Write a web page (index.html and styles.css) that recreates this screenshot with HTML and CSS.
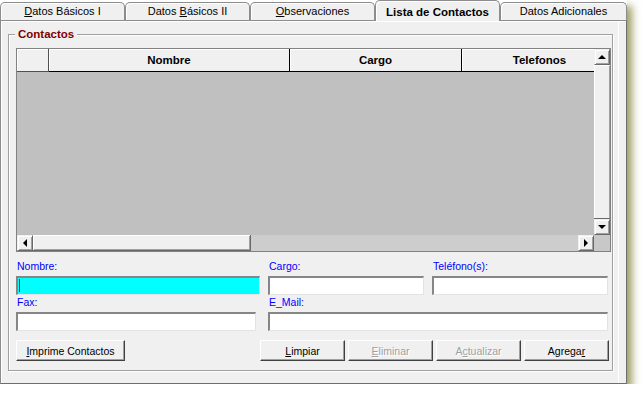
FILE: index.html
```html
<!DOCTYPE html>
<html lang="es">
  <head>
    <meta charset="UTF-8" />
    <title>Lista de Contactos</title>
    <link rel="stylesheet" href="styles.css">
  </head>
  <body>
    <div class="window">
      <!-- pestañas -->
      <div class="tabs">
        <div class="tab"><u>D</u>atos Básicos I</div>
        <div class="tab">Datos <u>B</u>ásicos II</div>
        <div class="tab"><u>O</u>bservaciones</div>
        <div class="tab active">Lista de Contactos</div>
        <div class="tab last">Datos Adicionales</div>
      </div>

      <div class="panel">
        <fieldset class="group">
          <legend>Contactos</legend>

          <!-- rejilla de contactos -->
          <div class="grid">
            <div class="grid-main">
              <div class="grid-area">
                <div class="grid-head">
                  <div class="hcell ind"></div>
                  <div class="hcell c-nombre">Nombre</div>
                  <div class="hcell c-cargo">Cargo</div>
                  <div class="hcell c-tel">Telefonos</div>
                </div>
                <div class="grid-body"></div>
              </div>
              <div class="vscroll">
                <div class="sbtn"><span class="arrow up"></span></div>
                <div class="vthumb"></div>
                <div class="sbtn"><span class="arrow down"></span></div>
              </div>
            </div>
            <div class="hscroll">
              <div class="sbtn"><span class="arrow left"></span></div>
              <div class="hthumb"></div>
              <div class="htrack"></div>
              <div class="sbtn"><span class="arrow right"></span></div>
              <div class="corner"></div>
            </div>
          </div>

          <!-- campos -->
          <div class="fields">
            <div class="field f-nombre">
              <label>Nombre:</label>
              <div class="box cyan"><span class="caret"></span></div>
            </div>
            <div class="field f-cargo">
              <label>Cargo:</label>
              <div class="box"></div>
            </div>
            <div class="field f-tel">
              <label>Teléfono(s):</label>
              <div class="box"></div>
            </div>
          </div>
          <div class="fields second">
            <div class="field f-fax">
              <label>Fax:</label>
              <div class="box"></div>
            </div>
            <div class="field f-mail">
              <label>E_Mail:</label>
              <div class="box"></div>
            </div>
          </div>

          <!-- botones -->
          <div class="buttons">
            <button class="btn wide"><u>I</u>mprime Contactos</button>
            <button class="btn push"><u>L</u>impiar</button>
            <button class="btn" disabled><u>E</u>liminar</button>
            <button class="btn" disabled>A<u>c</u>tualizar</button>
            <button class="btn">Agrega<u>r</u></button>
          </div>
        </fieldset>
      </div>
    </div>
  </body>
</html>
```

FILE: styles.css
```css
body {
  margin: 0;
  background: #ffffff;
  font-family: "Liberation Sans", Arial, sans-serif;
  color: #000000;
}
.window {
  width: 627px;
  box-shadow: 5px 6px 8px rgba(115, 115, 30, 0.7);
}
.tabs {
  display: flex;
  align-items: flex-end;
  height: 20px;
  position: relative;
  z-index: 1;
}
.tab {
  box-sizing: border-box;
  width: 125px;
  height: 18px;
  padding-top: 0;
  background: #f0f0f0;
  border: 1px solid #8c8c8c;
  border-bottom: none;
  border-radius: 5px 5px 0 0;
  box-shadow: inset 1px 1px 0 #ffffff;
  font-size: 11px;
  line-height: 16px;
  text-align: center;
  white-space: nowrap;
}
.tab.last {
  width: 127px;
}
.tab.active {
  height: 21px;
  margin-bottom: -1px;
  padding-top: 3px;
  font-weight: bold;
  font-size: 11.5px;
}
.panel {
  box-sizing: border-box;
  height: 364px;
  padding: 6px 0 0 7px;
  background: #f0f0f0;
  border: 1px solid #6e6e6e;
  border-top-color: #8c8c8c;
  border-left-color: #8c8c8c;
  box-shadow: inset 1px 1px 0 #ffffff, inset -7px 0 0 #f0f0f0, inset -8px 0 0 #ffffff;
}
.group {
  box-sizing: border-box;
  width: 605px;
  height: 344px;
  margin: 0;
  padding: 7px 0 0 7px;
  border: 1px solid #a0a0a0;
  box-shadow: inset 1px 1px 0 #ffffff, 1px 1px 0 #ffffff;
}
.group legend {
  margin-left: -1px;
  padding: 0 3px;
  background: #f0f0f0;
  color: #800000;
  font-weight: bold;
  font-size: 11.5px;
  line-height: 14px;
}
.grid {
  box-sizing: border-box;
  width: 595px;
  height: 204px;
  border: 1px solid #828282;
  display: flex;
  flex-direction: column;
}
.grid-main {
  display: flex;
  height: 186px;
}
.grid-area {
  flex: 1;
  display: flex;
  flex-direction: column;
  overflow: hidden;
}
.grid-head {
  display: flex;
  height: 23px;
  flex: none;
}
.hcell {
  box-sizing: border-box;
  flex: none;
  height: 23px;
  background: #f0f0f0;
  border-right: 1px solid #000000;
  border-bottom: 1px solid #000000;
  box-shadow: inset 1px 1px 0 #ffffff;
  font-weight: bold;
  font-size: 11.5px;
  line-height: 22px;
  text-align: center;
}
.hcell.ind {
  width: 32px;
  border-color: #505050;
}
.c-nombre {
  width: 241px;
}
.c-cargo {
  width: 172px;
}
.c-tel {
  width: 156px;
}
.grid-body {
  flex: 1;
  background: #c0c0c0;
}
.vscroll {
  width: 16px;
  display: flex;
  flex-direction: column;
}
.sbtn {
  box-sizing: border-box;
  flex: none;
  width: 16px;
  height: 16px;
  background: #f0f0f0;
  border: 1px solid #696969;
  border-top-color: #f0f0f0;
  border-left-color: #f0f0f0;
  box-shadow: inset 1px 1px 0 #ffffff, inset -1px -1px 0 #a0a0a0;
  display: flex;
  align-items: center;
  justify-content: center;
}
.vthumb {
  flex: 1;
  background: #f0f0f0;
  border-bottom: 1px solid #696969;
  box-shadow: inset 1px 1px 0 #ffffff, inset -1px 0 0 #a0a0a0;
}
.hscroll {
  display: flex;
  height: 16px;
}
.hthumb {
  box-sizing: border-box;
  width: 218px;
  background: #f0f0f0;
  border-right: 1px solid #696969;
  border-bottom: 1px solid #696969;
  box-shadow: inset 1px 1px 0 #ffffff, inset -1px -1px 0 #a0a0a0;
}
.htrack {
  flex: 1;
  background: #cdcdcd;
}
.corner {
  width: 16px;
  background: #c8c8c8;
}
.arrow {
  width: 0;
  height: 0;
  border: 4px solid transparent;
}
.arrow.up {
  border-bottom-color: #000000;
  border-top-width: 0;
  margin-top: -1px;
}
.arrow.down {
  border-top-color: #000000;
  border-bottom-width: 0;
}
.arrow.left {
  border-right-color: #000000;
  border-left-width: 0;
}
.arrow.right {
  border-left-color: #000000;
  border-right-width: 0;
}
.fields {
  display: flex;
  margin-top: 9px;
}
.fields.second {
  margin-top: 2px;
}
.field label {
  display: block;
  height: 11px;
  margin-bottom: 4px;
  padding-left: 1px;
  color: #0000ff;
  font-size: 10.5px;
  line-height: 11px;
}
.box {
  position: relative;
  box-sizing: border-box;
  height: 19px;
  background: #ffffff;
  border: 2px solid #868686;
  border-right: 1px solid #e3e3e3;
  border-bottom: 1px solid #e3e3e3;
}
.box.cyan {
  background: #00ffff;
}
.caret {
  position: absolute;
  left: 1px;
  top: 1px;
  width: 1px;
  height: 13px;
  background: #b00000;
}
.f-nombre {
  width: 244px;
}
.f-cargo {
  width: 156px;
  margin-left: 8px;
}
.f-tel {
  width: 176px;
  margin-left: 8px;
}
.f-fax {
  width: 240px;
}
.f-mail {
  width: 340px;
  margin-left: 12px;
}
.buttons {
  display: flex;
  margin-top: 9px;
}
.btn {
  box-sizing: border-box;
  width: 85px;
  height: 21px;
  margin: 0 3px 0 0;
  padding: 0;
  background: #f0f0f0;
  border: 1px solid #404040;
  border-top-color: #ffffff;
  border-left-color: #ffffff;
  box-shadow: inset -1px -1px 0 #a0a0a0;
  font-family: "Liberation Sans", Arial, sans-serif;
  font-size: 10.5px;
  color: #000000;
}
.btn.wide {
  width: 109px;
  margin-right: 0;
}
.btn.push {
  margin-left: 135px;
}
.btn:disabled {
  color: #a0a0a0;
  text-shadow: 1px 1px 0 #ffffff;
}
```
